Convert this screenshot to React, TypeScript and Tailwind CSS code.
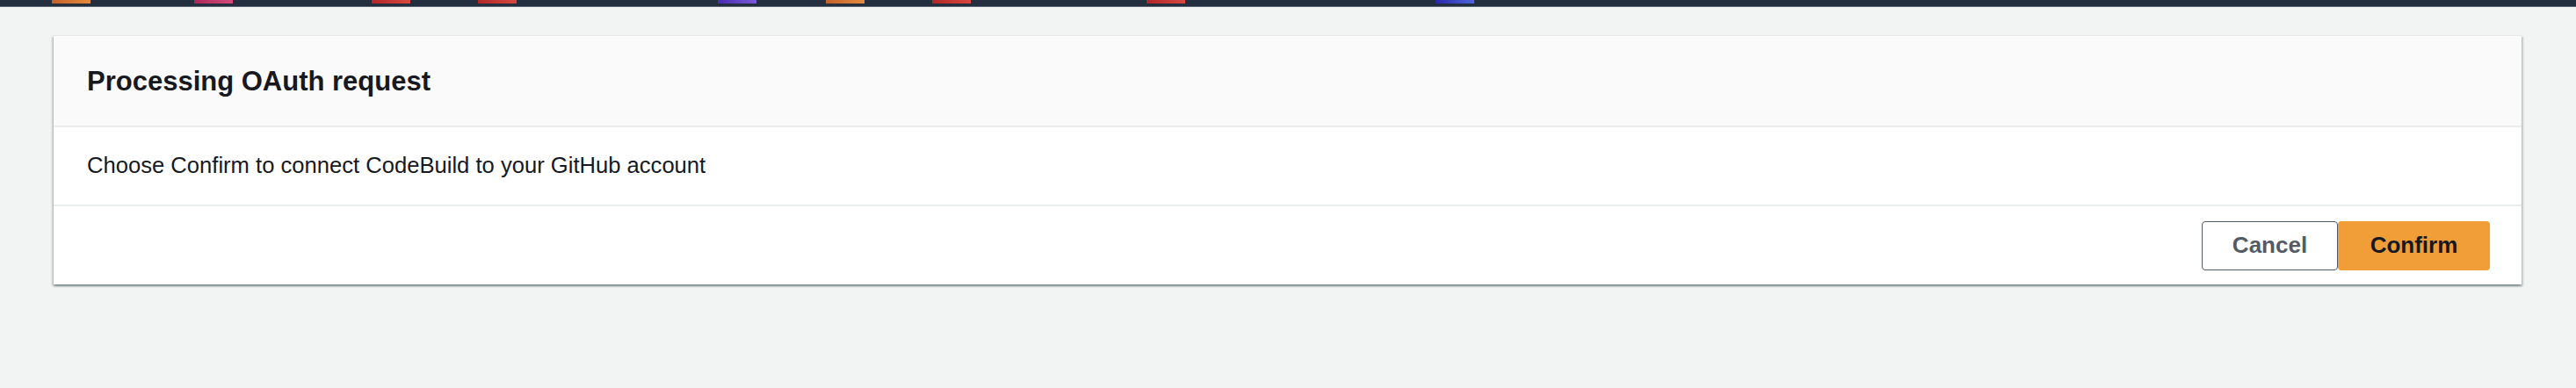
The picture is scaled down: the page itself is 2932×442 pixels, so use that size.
import React from "react";

const segs: { ml: string; grad: string }[] = [
  { ml: "ml-[59px]", grad: "bg-gradient-to-r from-[#c4602b] to-[#e38b3b]" },
  { ml: "ml-[118px]", grad: "bg-gradient-to-r from-[#ad2559] to-[#d24b7a]" },
  { ml: "ml-[158px]", grad: "bg-gradient-to-r from-[#b1262a] to-[#d8473f]" },
  { ml: "ml-[77px]", grad: "bg-gradient-to-r from-[#b1262a] to-[#d8473f]" },
  { ml: "ml-[229px]", grad: "bg-gradient-to-r from-[#4a2ab0] to-[#7b57d8]" },
  { ml: "ml-[79px]", grad: "bg-gradient-to-r from-[#c4602b] to-[#e38b3b]" },
  { ml: "ml-[77px]", grad: "bg-gradient-to-r from-[#b1262a] to-[#d8473f]" },
  { ml: "ml-[200px]", grad: "bg-gradient-to-r from-[#b1262a] to-[#d8473f]" },
  { ml: "ml-[285px]", grad: "bg-gradient-to-r from-[#2c25ab] to-[#5064db]" },
];

export default function App() {
  return (
    <div
      className="w-full h-[442px] bg-[#f2f3f3] flex flex-col"
      style={{ fontFamily: '"Liberation Sans", Arial, sans-serif' }}
    >
      <div className="h-[8px] bg-[#232f3e] border-b border-[#5b6270] flex items-start shrink-0">
        {segs.map((s, i) => (
          <div key={i} className={`${s.ml} w-[44px] h-[4px] ${s.grad}`} />
        ))}
      </div>
      <div className="mt-[32px] ml-[61px] mr-[62px] bg-white border-t border-[#e6e8e8] shadow-[0_2px_2px_0_rgba(0,28,36,0.3),2px_2px_2px_0_rgba(0,28,36,0.15),-2px_2px_2px_0_rgba(0,28,36,0.15)]">
        <div className="h-[104px] bg-[#fafafa] border-b-2 border-[#eaeded] flex items-center px-[38px]">
          <h2 className="text-[31px] font-bold text-[#16191f] leading-none">
            Processing OAuth request
          </h2>
        </div>
        <div className="h-[90px] border-b-2 border-[#eaeded] flex items-center px-[38px]">
          <p className="text-[25.6px] text-[#16191f] leading-none">
            Choose Confirm to connect CodeBuild to your GitHub account
          </p>
        </div>
        <div className="h-[89px] flex items-center justify-end pr-[36px]">
          <button className="w-[155px] h-[56px] border-[1.5px] border-[#545b64] rounded-[4px] bg-white text-[#545b64] text-[26px] font-bold flex items-center justify-center">
            Cancel
          </button>
          <button className="w-[173px] h-[56px] rounded-[4px] bg-[#f19e38] text-[#16191f] text-[26px] font-bold flex items-center justify-center">
            Confirm
          </button>
        </div>
      </div>
    </div>
  );
}
